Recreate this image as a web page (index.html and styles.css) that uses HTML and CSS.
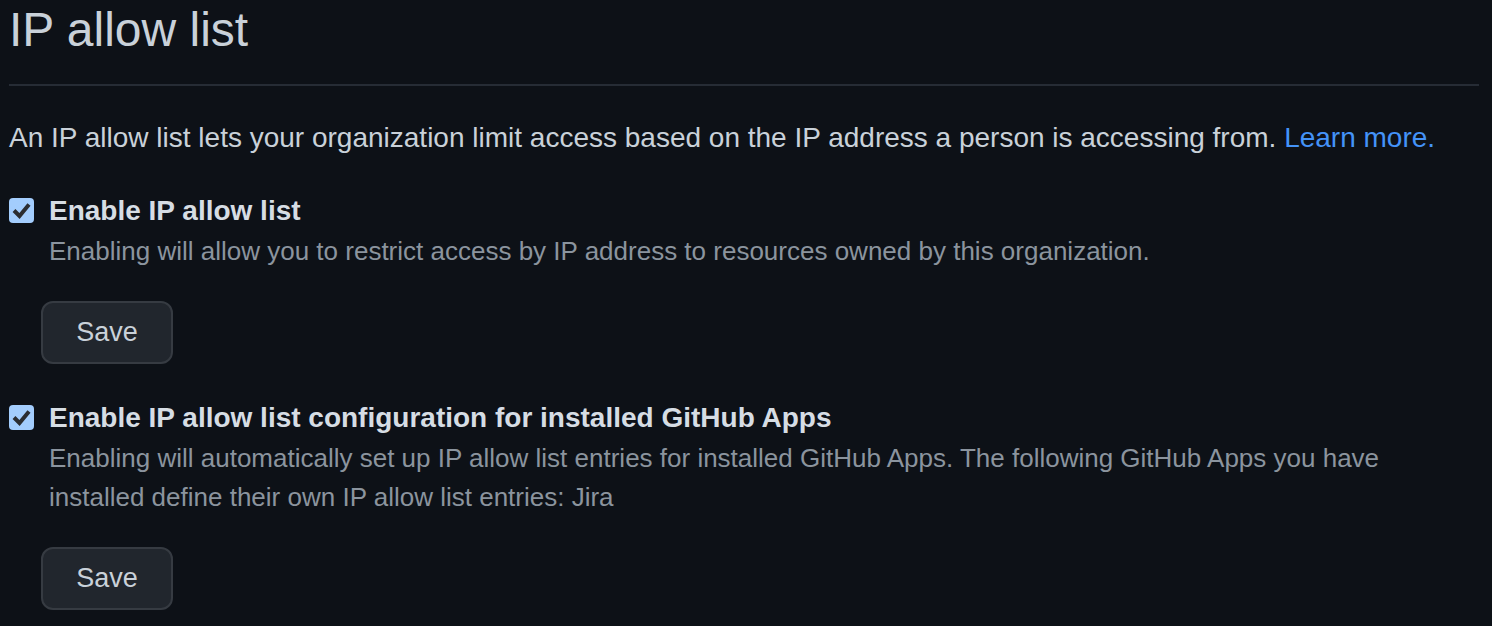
FILE: index.html
```html
<!DOCTYPE html>
<html lang="en">
<head>
<meta charset="utf-8">
<title>IP allow list</title>
<link rel="stylesheet" href="styles.css">
</head>
<body>
<main class="page">
  <h2 class="subhead">IP allow list</h2>
  <p class="intro">An IP allow list lets your organization limit access based on the IP address a person is accessing from. <a class="link" href="#">Learn more.</a></p>

  <form class="setting">
    <div class="check-item">
      <span class="checkbox">
        <svg width="25" height="25" viewBox="0 0 25 25"><rect x="0" y="0" width="25" height="25" rx="4" fill="#a3cdfd"/><path d="M5 12.5 L10.5 18 L20 6.5" fill="none" stroke="#2b2d31" stroke-width="4" stroke-linecap="butt" stroke-linejoin="miter"/></svg>
      </span>
      <div class="check-body">
        <div class="check-label">Enable IP allow list</div>
        <p class="note">Enabling will allow you to restrict access by IP address to resources owned by this organization.</p>
      </div>
    </div>
    <button type="button" class="btn">Save</button>
  </form>

  <form class="setting">
    <div class="check-item">
      <span class="checkbox">
        <svg width="25" height="25" viewBox="0 0 25 25"><rect x="0" y="0" width="25" height="25" rx="4" fill="#a3cdfd"/><path d="M5 12.5 L10.5 18 L20 6.5" fill="none" stroke="#2b2d31" stroke-width="4" stroke-linecap="butt" stroke-linejoin="miter"/></svg>
      </span>
      <div class="check-body">
        <div class="check-label">Enable IP allow list configuration for installed GitHub Apps</div>
        <p class="note">Enabling will automatically set up IP allow list entries for installed GitHub Apps. The following GitHub Apps you have installed define their own IP allow list entries: Jira</p>
      </div>
    </div>
    <button type="button" class="btn">Save</button>
  </form>
</main>
</body>
</html>
```

FILE: styles.css
```css
html, body {
  margin: 0;
  padding: 0;
  background: #0d1117;
}

body {
  font-family: "Liberation Sans", Arial, sans-serif;
  color: #c9d1d9;
  overflow: hidden;
}

.page {
  margin-left: 9px;
  width: 1470px;
}

.subhead {
  margin: 0;
  font-size: 48px;
  line-height: 60px;
  font-weight: 400;
  color: #c9d1d9;
  padding-bottom: 24px;
  border-bottom: 2px solid #262c35;
}

.intro {
  margin: 31px 0 0 0;
  font-size: 28px;
  line-height: 42px;
  color: #c9d1d9;
}

.link {
  color: #4493f8;
  text-decoration: none;
}

.setting {
  margin: 31px 0 0 0;
}

.setting + .setting {
  margin-top: 33px;
}

.check-item {
  display: flex;
  align-items: flex-start;
}

.checkbox {
  width: 40px;
  flex: none;
  padding-top: 8px;
  height: 25px;
  display: block;
}

.checkbox svg {
  display: block;
}

.check-body {
  flex: 1;
}

.check-label {
  font-size: 28px;
  line-height: 42px;
  font-weight: 700;
  color: #d6dde4;
}

.note {
  margin: 0;
  font-size: 26px;
  line-height: 39px;
  color: #8b949e;
  max-width: 1360px;
}

.btn {
  display: block;
  margin: 30px 0 0 32px;
  width: 132px;
  height: 63px;
  box-sizing: border-box;
  background: #21262d;
  border: 2px solid #363b42;
  border-radius: 12px;
  color: #c9d1d9;
  font-family: "Liberation Sans", Arial, sans-serif;
  font-size: 27px;
  padding: 0;
}
```
